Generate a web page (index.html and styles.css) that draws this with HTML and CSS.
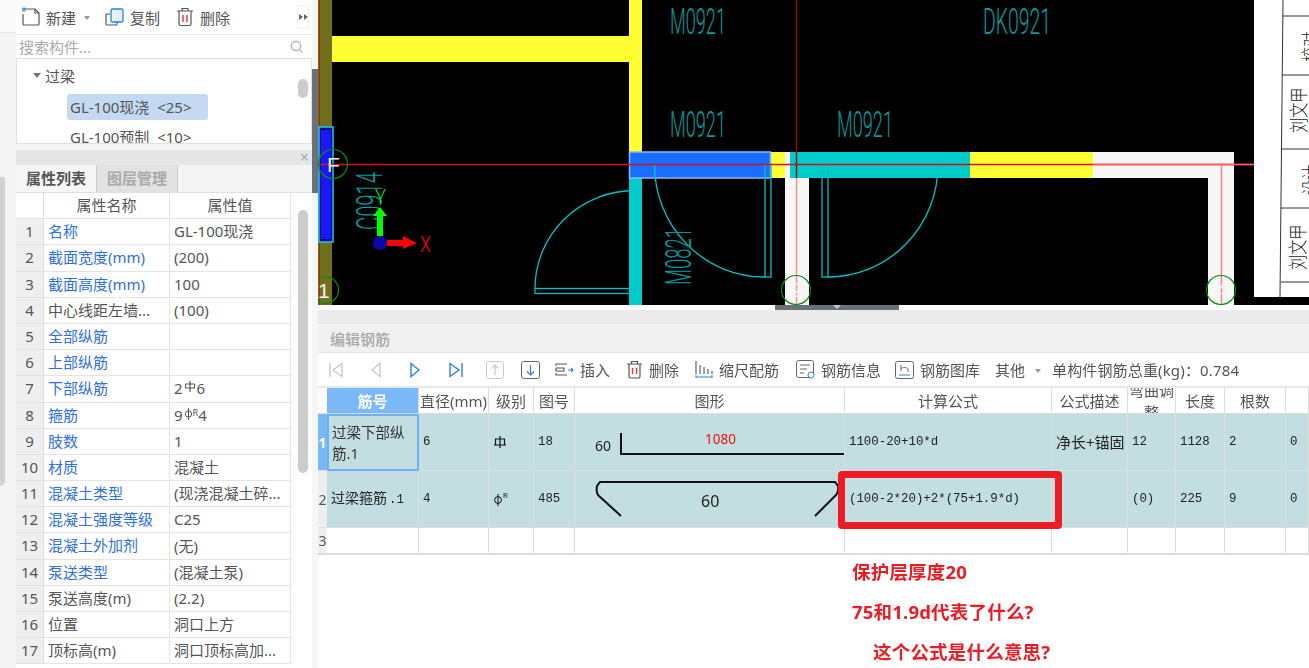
FILE: index.html
```html
<!DOCTYPE html>
<html lang="zh">
<head>
<meta charset="utf-8">
<title>编辑钢筋</title>
<link rel="stylesheet" href="styles.css">
</head>
<body>
<div class="app">
  <aside class="gutter">
    <div class="gutter-top"></div>
    <div class="gutter-thumb"></div>
  </aside>

  <section class="left">
    <div class="left-toolbar">
      <div class="tool"><svg class="ico" width="20" height="20" viewBox="0 0 20 20"><path d="M5 2h9l4 4v11a1 1 0 0 1-1 1H3a1 1 0 0 1-1-1V7" fill="none" stroke="#555" stroke-width="1.2"/><path d="M14 2v4h4" fill="none" stroke="#555" stroke-width="1.2"/><path d="M1 2h4M3 0v5M1 1l4 3M5 1L1 4" stroke="#2f8fe8" stroke-width="1"/></svg><span class="tool-label">新建</span><span class="caret"></span></div>
      <div class="tool"><svg class="ico" width="20" height="20" viewBox="0 0 20 20"><path d="M5 7H2a1 1 0 0 0-1 1v9a1 1 0 0 0 1 1h9a1 1 0 0 0 1-1v-2" fill="none" stroke="#555" stroke-width="1.2"/><rect x="6" y="2" width="12" height="13" rx="1.5" fill="#e6f1fc" stroke="#2f7fd8" stroke-width="1.3"/></svg><span class="tool-label">复制</span></div>
      <div class="tool"><svg class="ico" width="18" height="20" viewBox="0 0 18 20"><path d="M1 4h16M6 4V1.500h6V4" fill="none" stroke="#555" stroke-width="1.2"/><path d="M3 4v13a1.500 1.500 0 0 0 1.500 1.500h9A1.500 1.500 0 0 0 15 17V4" fill="none" stroke="#555" stroke-width="1.2"/><path d="M7 8v7M11 8v7" stroke="#e0353a" stroke-width="1.4"/></svg><span class="tool-label">删除</span></div>
      <div class="more"><svg width="9" height="8" viewBox="0 0 9 8"><path d="M0 1l4 3-4 3zM5 1l4 3-4 3z" fill="#666"/></svg></div>
    </div>
    <div class="search">
      <span class="search-text">搜索构件...</span>
      <svg width="14" height="14" viewBox="0 0 14 14"><circle cx="6" cy="6" r="4.600" fill="none" stroke="#bbb" stroke-width="1.6"/><path d="M9.500 9.500l3 3" stroke="#bbb" stroke-width="1.6"/></svg>
    </div>
    <div class="tree">
      <div class="tree-group"><span class="tree-arrow"></span>过梁</div>
      <div class="tree-item is-selected">GL-100现浇  &lt;25&gt;</div>
      <div class="tree-item">GL-100预制  &lt;10&gt;</div>
      <div class="tree-thumb"></div>
    </div>
    <div class="props-head"><span class="close">×</span></div>
    <div class="tabs">
      <div class="tab is-active">属性列表</div>
      <div class="tab">图层管理</div>
    </div>
    <div class="props">
      <div class="props-table">
        <div class="p-row p-header"><div class="p-num"></div><div class="p-name p-center">属性名称</div><div class="p-val p-center">属性值</div></div>
        <div class="p-row"><div class="p-num">1</div><div class="p-name link">名称</div><div class="p-val">GL-100现浇</div></div>
        <div class="p-row"><div class="p-num">2</div><div class="p-name link">截面宽度(mm)</div><div class="p-val">(200)</div></div>
        <div class="p-row"><div class="p-num">3</div><div class="p-name link">截面高度(mm)</div><div class="p-val">100</div></div>
        <div class="p-row"><div class="p-num">4</div><div class="p-name">中心线距左墙...</div><div class="p-val">(100)</div></div>
        <div class="p-row"><div class="p-num">5</div><div class="p-name link">全部纵筋</div><div class="p-val"></div></div>
        <div class="p-row"><div class="p-num">6</div><div class="p-name link">上部纵筋</div><div class="p-val"></div></div>
        <div class="p-row"><div class="p-num">7</div><div class="p-name link">下部纵筋</div><div class="p-val">2<svg class="grade" width="12" height="12" viewBox="0 0 12 12"><path d="M6 0v11M1 7h10" stroke="#555" fill="none" stroke-width="1.2"/><path d="M1.500 7V3h9v4" stroke="#555" fill="none"/></svg>6</div></div>
        <div class="p-row"><div class="p-num">8</div><div class="p-name link">箍筋</div><div class="p-val">9<svg class="grade" width="9" height="12" viewBox="0 0 9 12"><circle cx="4.500" cy="6" r="3.200" fill="none" stroke="#555"/><path d="M4.500 0v12" stroke="#555"/></svg><sup class="grade-r">R</sup>4</div></div>
        <div class="p-row"><div class="p-num">9</div><div class="p-name link">肢数</div><div class="p-val">1</div></div>
        <div class="p-row"><div class="p-num">10</div><div class="p-name link">材质</div><div class="p-val">混凝土</div></div>
        <div class="p-row"><div class="p-num">11</div><div class="p-name link">混凝土类型</div><div class="p-val">(现浇混凝土碎...</div></div>
        <div class="p-row"><div class="p-num">12</div><div class="p-name link">混凝土强度等级</div><div class="p-val">C25</div></div>
        <div class="p-row"><div class="p-num">13</div><div class="p-name link">混凝土外加剂</div><div class="p-val">(无)</div></div>
        <div class="p-row"><div class="p-num">14</div><div class="p-name link">泵送类型</div><div class="p-val">(混凝土泵)</div></div>
        <div class="p-row"><div class="p-num">15</div><div class="p-name">泵送高度(m)</div><div class="p-val">(2.2)</div></div>
        <div class="p-row"><div class="p-num">16</div><div class="p-name">位置</div><div class="p-val">洞口上方</div></div>
        <div class="p-row"><div class="p-num">17</div><div class="p-name">顶标高(m)</div><div class="p-val">洞口顶标高加...</div></div>
      </div>
      <div class="props-scroll"><div class="props-thumb"></div></div>
    </div>
  </section>

  <div class="splitter"><div class="splitter-thumb"></div></div>

  <main class="right">
    <svg class="cad" width="991" height="305" viewBox="318 0 991 305">
      <rect x="318" y="0" width="991" height="305" fill="#000"/>
      <!-- walls -->
      <rect x="318" y="0" width="14" height="305" fill="#6f6f1c"/>
      <rect x="332" y="36" width="297" height="26" fill="#ffff33"/>
      <rect x="629" y="0" width="13" height="152" fill="#ffff33"/>
      <rect x="629" y="178" width="13" height="127" fill="#00cccc"/>
      <rect x="770" y="152" width="15" height="26" fill="#ffff33"/>
      <rect x="785" y="152" width="6" height="26" fill="#f7f7f7"/>
      <rect x="790" y="152" width="180" height="26" fill="#00cccc"/>
      <rect x="970" y="152" width="123" height="26" fill="#ffff33"/>
      <rect x="1093" y="152" width="141" height="26" fill="#f7f7f7"/>
      <rect x="785" y="178" width="24" height="127" fill="#f7f7f7"/>
      <rect x="1208" y="178" width="26" height="127" fill="#f7f7f7"/>
      <!-- selected beam and column -->
      <rect x="629.500" y="152" width="141" height="26" fill="#1a6eff" stroke="#8ab8ff" stroke-width="1.5"/>
      <rect x="319" y="127" width="14" height="115" fill="#0a0a80" stroke="#22c8e8" stroke-width="1.5"/>
      <rect x="321" y="130" width="10" height="109" fill="#1818ff"/>
      <!-- doors -->
      <g fill="none" stroke="#00c4c8" stroke-width="1.3">
        <path d="M635 190.500A100 98 0 0 0 535 288"/>
        <rect x="535" y="288.500" width="100" height="5"/>
        <path d="M654.500 165A110 112 0 0 0 765 277"/>
        <rect x="765" y="165" width="6" height="112"/>
        <path d="M938 165A110 112 0 0 1 828 277"/>
        <rect x="822" y="165" width="6" height="112"/>
      </g>
      <!-- labels -->
      <text class="cad-label" x="670" y="34" textLength="56" lengthAdjust="spacingAndGlyphs">M0921</text>
      <text class="cad-label" x="670" y="137" textLength="56" lengthAdjust="spacingAndGlyphs">M0921</text>
      <text class="cad-label" x="837" y="137" textLength="56" lengthAdjust="spacingAndGlyphs">M0921</text>
      <text class="cad-label" x="983" y="34" textLength="68" lengthAdjust="spacingAndGlyphs">DK0921</text>
      <text class="cad-label" transform="translate(382 230) rotate(-90)" textLength="58" lengthAdjust="spacingAndGlyphs">C0914</text>
      <text class="cad-label" transform="translate(691 285) rotate(-90)" textLength="57" lengthAdjust="spacingAndGlyphs">M0821</text>
      <!-- guide lines -->
      <path d="M318 164.500H1254" stroke="#d0101a" stroke-width="1.5"/>
      <path d="M1093 164.500H1254" stroke="#ff6060" stroke-width="1.5"/>
      <path d="M796.500 0V178" stroke="#8c0a10" stroke-width="1.4"/>
      <path d="M796.500 178V305" stroke="#ff8f8f" stroke-width="1.5"/>
      <path d="M1221.500 165V305" stroke="#ff8080" stroke-width="1.5"/>
      <path d="M319.500 243V305" stroke="#b02010" stroke-width="1"/>
      <path d="M319.500 0V126" stroke="#b02010" stroke-width="1"/>
      <!-- axes -->
      <path d="M377 236V216H373L380 207 387 216H383V236Z" fill="#00ff00"/>
      <path d="M387 240H403V236L417 243 403 249V246H387Z" fill="#ff0000"/>
      <circle cx="380" cy="243" r="7" fill="#0808a8"/>
      <text class="cad-axis cad-axis-x" x="420" y="252" textLength="11" lengthAdjust="spacingAndGlyphs">X</text>
      <text class="cad-axis cad-axis-y" x="375" y="205" textLength="11" lengthAdjust="spacingAndGlyphs">Y</text>
      <!-- grid bubbles -->
      <g fill="none" stroke="#0c8a14" stroke-width="1.2">
        <circle cx="333" cy="164" r="14.500"/>
        <circle cx="325" cy="290" r="13.500"/>
        <circle cx="796" cy="290" r="14.500"/>
        <circle cx="1221" cy="290" r="14.500"/>
      </g>
      <text class="cad-bubble" x="327" y="172">F</text>
      <text class="cad-bubble" x="318" y="298">1</text>
      <text class="cad-bubble" x="791" y="297">2</text>
      <text class="cad-bubble" x="1216" y="297">4</text>
      <!-- drawing paper behind -->
      <rect x="1254" y="0" width="55" height="297" fill="#fff"/>
      <g fill="none" stroke="#333" stroke-width="1">
        <path d="M1283 0L1280 297"/>
        <path d="M1283 16H1309M1282 75H1309M1282 149H1309M1281 208H1309M1281 282H1309"/>
      </g>
      <text class="paper" transform="translate(1306 133) rotate(-90) scale(0.8 1)">刘文甲</text>
      <text class="paper" transform="translate(1305 270) rotate(-90) scale(0.8 1)">刘文甲</text>
      <text class="paper" transform="translate(1318 62) rotate(-90) scale(0.8 1)">校对</text>
      <text class="paper" transform="translate(1318 195) rotate(-90) scale(0.8 1)">设计</text>
    </svg>

    <div class="handle"><div class="handle-thumb"><span class="handle-arrow"></span></div></div>

    <div class="title-strip"></div>
    <div class="title-bar"><span class="title-text">编辑钢筋</span></div>

    <div class="rebar-toolbar">
      <svg width="14" height="16" viewBox="0 0 14 16"><path d="M1 1v14" stroke="#c8c8c8" stroke-width="1.4"/><path d="M13 1.500L4 8l9 6.500z" fill="none" stroke="#c8c8c8" stroke-width="1.3"/></svg>
      <svg width="10" height="16" viewBox="0 0 10 16"><path d="M9 1.500L1 8l8 6.500z" fill="none" stroke="#c8c8c8" stroke-width="1.3"/></svg>
      <svg width="10" height="16" viewBox="0 0 10 16"><path d="M1 1.500L9 8l-8 6.500z" fill="none" stroke="#2f80e0" stroke-width="1.4"/></svg>
      <svg width="14" height="16" viewBox="0 0 14 16"><path d="M1 1.500L10 8l-9 6.500z" fill="none" stroke="#2f80e0" stroke-width="1.4"/><path d="M13 1v14" stroke="#2f80e0" stroke-width="1.4"/></svg>
      <svg width="18" height="18" viewBox="0 0 18 18"><rect x="0.500" y="0.500" width="17" height="17" rx="2" fill="none" stroke="#c8c8c8"/><path d="M9 14V4M5.500 7.500L9 4l3.500 3.500" fill="none" stroke="#c8c8c8" stroke-width="1.2"/></svg>
      <svg width="19" height="18" viewBox="0 0 19 18"><rect x="0.500" y="0.500" width="18" height="17" rx="2" fill="none" stroke="#666"/><path d="M9.500 4v10M6 10.500L9.500 14l3.500-3.500" fill="none" stroke="#2f80e0" stroke-width="1.2"/></svg>
      <div class="r-tool"><svg width="19" height="14" viewBox="0 0 19 14"><path d="M12 1H1v2M1 5h8v3H1zM1 10v2h11" fill="none" stroke="#555" stroke-width="1.1"/><path d="M13 7h5M16 5l2 2-2 2" fill="none" stroke="#2f80e0" stroke-width="1.1"/></svg><span>插入</span></div>
      <div class="r-tool"><svg width="17" height="19" viewBox="0 0 17 19"><path d="M1 4h15M5.500 4V1.500h6V4" fill="none" stroke="#555" stroke-width="1.2"/><path d="M3 4v12.500A1.500 1.500 0 0 0 4.500 18h8a1.500 1.500 0 0 0 1.500-1.500V4" fill="none" stroke="#555" stroke-width="1.2"/><path d="M6.500 8v6M10.500 8v6" stroke="#e0353a" stroke-width="1.4"/></svg><span>删除</span></div>
      <div class="r-tool"><svg width="18" height="19" viewBox="0 0 18 19"><path d="M1 1v13M5 5v9M9 7v7M13 9v5M17 11v3" stroke="#555" stroke-width="1.1"/><path d="M1 15v3M17 15v3M1 17h16" stroke="#2f80e0" stroke-width="1.1"/></svg><span>缩尺配筋</span></div>
      <div class="r-tool"><svg width="19" height="19" viewBox="0 0 19 19"><rect x="0.500" y="0.500" width="17" height="17" rx="2" fill="none" stroke="#666"/><path d="M4 5h10M4 9h7M4 13h4" stroke="#666"/><circle cx="15" cy="15" r="3" fill="#fff" stroke="#2f80e0"/></svg><span>钢筋信息</span></div>
      <div class="r-tool"><svg width="19" height="18" viewBox="0 0 19 18"><rect x="0.500" y="0.500" width="18" height="17" rx="2" fill="none" stroke="#666"/><path d="M6 4v6M6 8c1-2 6-2 7 0v3" fill="none" stroke="#666"/><path d="M4 14h11" stroke="#2f80e0"/></svg><span>钢筋图库</span></div>
      <div class="r-tool"><span>其他</span><span class="caret caret-other"></span></div>
      <div class="r-total">单构件钢筋总重(kg)：0.784</div>
    </div>

    <div class="rebar-grid">
      <div class="g-row g-head">
        <div class="g-num"></div>
        <div class="g-cell is-current">筋号</div>
        <div class="g-cell">直径(mm)</div>
        <div class="g-cell">级别</div>
        <div class="g-cell">图号</div>
        <div class="g-cell">图形</div>
        <div class="g-cell">计算公式</div>
        <div class="g-cell">公式描述</div>
        <div class="g-cell g-wrap">弯曲调整</div>
        <div class="g-cell">长度</div>
        <div class="g-cell">根数</div>
        <div class="g-cell"></div>
      </div>
      <div class="g-row g-data">
        <div class="g-num is-current">1</div>
        <div class="g-cell g-name is-selected">过梁下部纵筋.1</div>
        <div class="g-cell g-mono">6</div>
        <div class="g-cell g-mono"><svg width="14" height="14" viewBox="0 0 14 14"><path d="M7 1v12M1 10h12" fill="none" stroke="#111" stroke-width="1.2"/><path d="M2.500 10V4h9v6" fill="none" stroke="#111" stroke-width="1.2"/></svg></div>
        <div class="g-cell g-mono">18</div>
        <div class="g-cell g-shape">
          <svg width="270" height="57" viewBox="575 414 270 57"><path d="M621 433V454H845" fill="none" stroke="#111" stroke-width="2"/><text class="shape-num" x="595" y="451">60</text><text class="shape-len" x="705" y="444">1080</text></svg>
        </div>
        <div class="g-cell g-mono">1100-20+10*d</div>
        <div class="g-cell g-text">净长+锚固</div>
        <div class="g-cell g-mono">12</div>
        <div class="g-cell g-mono">1128</div>
        <div class="g-cell g-mono">2</div>
        <div class="g-cell g-mono">0</div>
      </div>
      <div class="g-row g-data">
        <div class="g-num">2</div>
        <div class="g-cell g-name g-name-flat"><span>过梁箍筋<span class="g-suffix">.1</span></span></div>
        <div class="g-cell g-mono">4</div>
        <div class="g-cell g-mono"><svg width="10" height="14" viewBox="0 0 10 14"><circle cx="5" cy="8" r="3.400" fill="none" stroke="#111"/><path d="M5 2v12" stroke="#111"/></svg><sup class="grade-s">R</sup></div>
        <div class="g-cell g-mono">485</div>
        <div class="g-cell g-shape">
          <svg width="270" height="57" viewBox="575 471 270 57"><path d="M621 516L598 495Q596 492 597 486L600 482H835L838 486Q839 492 836 495L815 516" fill="none" stroke="#111" stroke-width="2"/><text class="shape-num shape-num-lg" x="701" y="507">60</text></svg>
        </div>
        <div class="g-cell g-mono">(100-2*20)+2*(75+1.9*d)</div>
        <div class="g-cell"></div>
        <div class="g-cell g-mono">(0)</div>
        <div class="g-cell g-mono">225</div>
        <div class="g-cell g-mono">9</div>
        <div class="g-cell g-mono">0</div>
      </div>
      <div class="g-row g-empty">
        <div class="g-num">3</div>
        <div class="g-cell"></div><div class="g-cell"></div><div class="g-cell"></div><div class="g-cell"></div><div class="g-cell"></div><div class="g-cell"></div><div class="g-cell"></div><div class="g-cell"></div><div class="g-cell"></div><div class="g-cell"></div><div class="g-cell"></div>
      </div>
      <div class="mark-box"></div>
    </div>

    <div class="notes">
      <p class="note">保护层厚度20</p>
      <p class="note">75和1.9d代表了什么?</p>
      <p class="note note-indent">这个公式是什么意思?</p>
    </div>
  </main>
</div>
</body>
</html>
```

FILE: styles.css
```css
* { box-sizing: border-box; }
html, body { margin: 0; padding: 0; height: 100%; overflow: hidden; background: #fff; }
body { font-family: "Noto Sans", "Noto Sans CJK SC", sans-serif; font-size: 15px; color: #555; }

.app { display: grid; grid-template-columns: 16px 296px 6px 991px; width: 1309px; height: 668px; overflow: hidden; filter: blur(0.4px); }

/* far-left gutter */
.gutter { background: #f4f4f4; position: relative; }
.gutter-top { height: 33px; background: #fafafa; border-bottom: 1px solid #e4e4e4; }
.gutter-thumb { width: 5px; height: 309px; margin-top: 144px; background: #d2d2d2; border-radius: 0 3px 5px 0; }

/* left panel */
.left { display: flex; flex-direction: column; background: #f4f4f4; height: 668px; overflow: hidden; }
.left-toolbar { display: grid; grid-template-columns: 84px 71px 121px 12px; align-items: center; height: 35px; padding-left: 5px; background: #fff; border-bottom: 1px solid #e8e8e8; }
.tool { display: flex; align-items: center; color: #555; }
.tool-label { margin: 2px 0 0 5px; line-height: 20px; }
.left-toolbar .tool:nth-child(3) .tool-label { margin-left: 6px; }
.caret { display: inline-block; width: 0; height: 0; margin-left: 8px; margin-top: 2px; border: 3.5px solid transparent; border-top: 4px solid #999; border-bottom: 0; }
.more { display: flex; align-items: center; justify-content: center; width: 12px; height: 24px; border: 1px solid #eee; border-radius: 3px; }

.search { display: flex; align-items: center; justify-content: space-between; height: 24px; padding: 0 8px 0 3px; background: #fff; border-bottom: 1px solid #dedede; }
.search-text { color: #aaa; }

.tree { position: relative; height: 85px; padding: 4px 0 0 16px; background: #fff; border: 1px solid #e0e0e0; border-top: 0; overflow: hidden; }
.tree-group { display: flex; align-items: center; height: 25px; color: #555; }
.tree-arrow { width: 0; height: 0; margin-right: 4px; border: 4px solid transparent; border-top: 5px solid #777; border-bottom: 0; }
.tree-item { width: 141px; height: 26px; margin: 6px 0 0 34px; padding-left: 3px; line-height: 26px; border-radius: 3px; white-space: pre; }
.tree-item + .tree-item { margin-top: 4px; }
.tree-item.is-selected { background: #c4daf3; }
.tree-thumb { position: absolute; top: 20px; left: 281px; width: 10px; height: 19px; background: #ccc; border-radius: 5px; }

.props-head { position: relative; height: 15px; margin-top: 6px; background: #e6e6e6; }
.close { position: absolute; right: 3px; top: -3px; font-size: 16px; line-height: 20px; color: #aaa; }
.tabs { display: flex; height: 28px; background: #f4f4f4; border-bottom: 1px solid #e0e0e0; }
.tab { width: 81px; line-height: 27px; text-align: center; font-weight: 700; color: #aaa; background: #e2e2e2; border-right: 1px solid #ccc; }
.tab.is-active { color: #555; background: #f6f6f6; }

.props { display: grid; grid-template-columns: 275px 21px; background: #fff; flex: 1; }
.props-table { display: flex; flex-direction: column; }
.p-row { display: grid; grid-template-columns: 28px 126px 121px; height: 26.2px; border-bottom: 1px solid #e4e4e4; line-height: 25px; }
.p-num { background: #efefef; text-align: center; border-right: 1px solid #ddd; }
.p-name { padding-left: 4px; border-right: 1px solid #e4e4e4; white-space: nowrap; overflow: hidden; }
.p-val { display: flex; align-items: center; padding-left: 4px; white-space: nowrap; overflow: hidden; border-right: 1px solid #e4e4e4; }
.p-center { justify-content: center; text-align: center; padding-left: 0; }
.p-header .p-num { background: #fff; }
.link { color: #2f6fe0; }
.grade { margin: 0 1px 3px; }
.grade-r { font-size: 9px; line-height: 1; margin: 0 0 6px -1px; }
.props-scroll { position: relative; background: #fff; }
.props-thumb { position: absolute; top: 17px; left: 7px; width: 10px; height: 263px; background: #ccc; border-radius: 5px; }

/* splitter */
.splitter { background: #f6f6f6; padding-top: 69px; }
.splitter-thumb { height: 124px; background: #6b7178; }

/* right */
.right { position: relative; display: flex; flex-direction: column; height: 668px; overflow: hidden; }
.cad { display: block; flex: none; }
.cad-label { font-family: Roboto, "Liberation Sans", sans-serif; font-size: 37px; fill: #059a9c; font-weight: 300; }
.cad-axis { font-family: Roboto, "Liberation Sans", sans-serif; font-size: 22px; font-weight: 300; }
.cad-axis-x { fill: #ff0000; }
.cad-axis-y { fill: #00e000; }
.cad-bubble { font-family: "Liberation Sans", sans-serif; font-size: 21px; fill: #f4f4f4; }
.paper { font-family: "Noto Sans CJK SC", sans-serif; font-size: 19px; fill: #222; font-weight: 300; }

.handle { height: 5px; background: #fff; flex: none; }
.handle-thumb { display: flex; justify-content: center; width: 124px; height: 5px; margin-left: 457px; background: #6b7178; }
.handle-arrow { width: 0; height: 0; border: 4px solid transparent; border-top: 4px solid #c8c8c8; border-bottom: 0; }

.title-strip { height: 15px; background: #ebebeb; border-bottom: 1px solid #f7f7f7; flex: none; }
.title-bar { display: flex; align-items: center; height: 28px; padding: 0 0 0 12px; background: #f1f1f1; border-bottom: 1px solid #e4e4e4; flex: none; }
.title-text { color: #a8a8a8; font-weight: 500; line-height: 20px; }

.rebar-toolbar { display: grid; grid-template-columns: 42px 39px 39px 37px 35px 34px 71px 69px 101px 99px 100px 57px auto; align-items: center; height: 35px; padding-left: 11px; background: #fff; border-bottom: 2px solid #e8e8e8; flex: none; }
.r-tool { display: flex; align-items: center; gap: 6px; color: #555; white-space: nowrap; }
.caret-other { margin-left: 4px; }
.r-total { white-space: nowrap; color: #555; letter-spacing: 0.15px; }

.rebar-grid { position: relative; flex: none; }
.g-row { display: grid; grid-template-columns: 9px 92px 70px 45px 41px 270px 207px 76px 48px 49px 61px 23px; }
.g-head { height: 26px; background: #fff; }
.g-data { height: 57px; background: #c2dee0; }
.g-empty { height: 27px; background: #fff; border-bottom: 1px solid #ddd; }
.g-num { display: flex; align-items: center; justify-content: center; background: #efefef; font-size: 14px; border-bottom: 1px solid #ddd; overflow: hidden; }
.g-num.is-current { background: #7ab8f8; color: #fff; font-weight: 700; }
.g-head .g-num { background: #fff; }
.g-cell { display: flex; align-items: center; justify-content: center; min-width: 0; border-right: 1px solid #ddd; border-bottom: 1px solid #ddd; overflow: hidden; color: #555; white-space: nowrap; }
.g-head .is-current { background: #7ab8f8; color: #fff; font-weight: 700; }
.g-wrap { white-space: normal; line-height: 22px; text-align: center; height: 26px; }
.g-data .g-cell { justify-content: flex-start; padding: 0 0 1px 4px; color: #222; }
.g-data .g-mono { font-family: "Liberation Mono", "Noto Sans CJK SC", monospace; font-size: 12.4px; }
.g-data .g-name { white-space: normal; line-height: 21px; font-size: 14.500px; padding: 0 9px 0 4px; color: #333; }
.g-data .g-name-flat { padding: 0 0 1px 4px; white-space: nowrap; font-size: 14px; color: #222; }
.g-suffix { font-family: "Liberation Mono", monospace; font-size: 12.4px; margin-left: 2px; }
.g-data .g-name.is-selected { border: 2px solid #6fb0f5; padding-left: 3px; }
.g-data .g-text { padding-bottom: 1px; }
.g-data .g-shape { display: block; padding: 0; }
.g-shape svg { display: block; }
.grade-s { font-size: 8px; line-height: 1; margin: 0 0 6px 0; }
.shape-num { font-family: "Noto Sans", sans-serif; font-size: 14px; fill: #222; }
.shape-num-lg { font-size: 16px; }
.shape-len { font-family: "Noto Sans", sans-serif; font-size: 13.500px; fill: #f01010; }

.mark-box { position: absolute; left: 520px; top: 83px; width: 224px; height: 58px; border: 7px solid #ed1c24; border-radius: 4px; pointer-events: none; }

.notes { padding: 4px 0 0 534px; flex: none; }
.note { margin: 0; height: 40px; font-size: 18.500px; line-height: 26px; font-weight: 700; color: #ed1c24; white-space: nowrap; letter-spacing: 0.2px; }
.note-indent { padding-left: 21px; }
```
